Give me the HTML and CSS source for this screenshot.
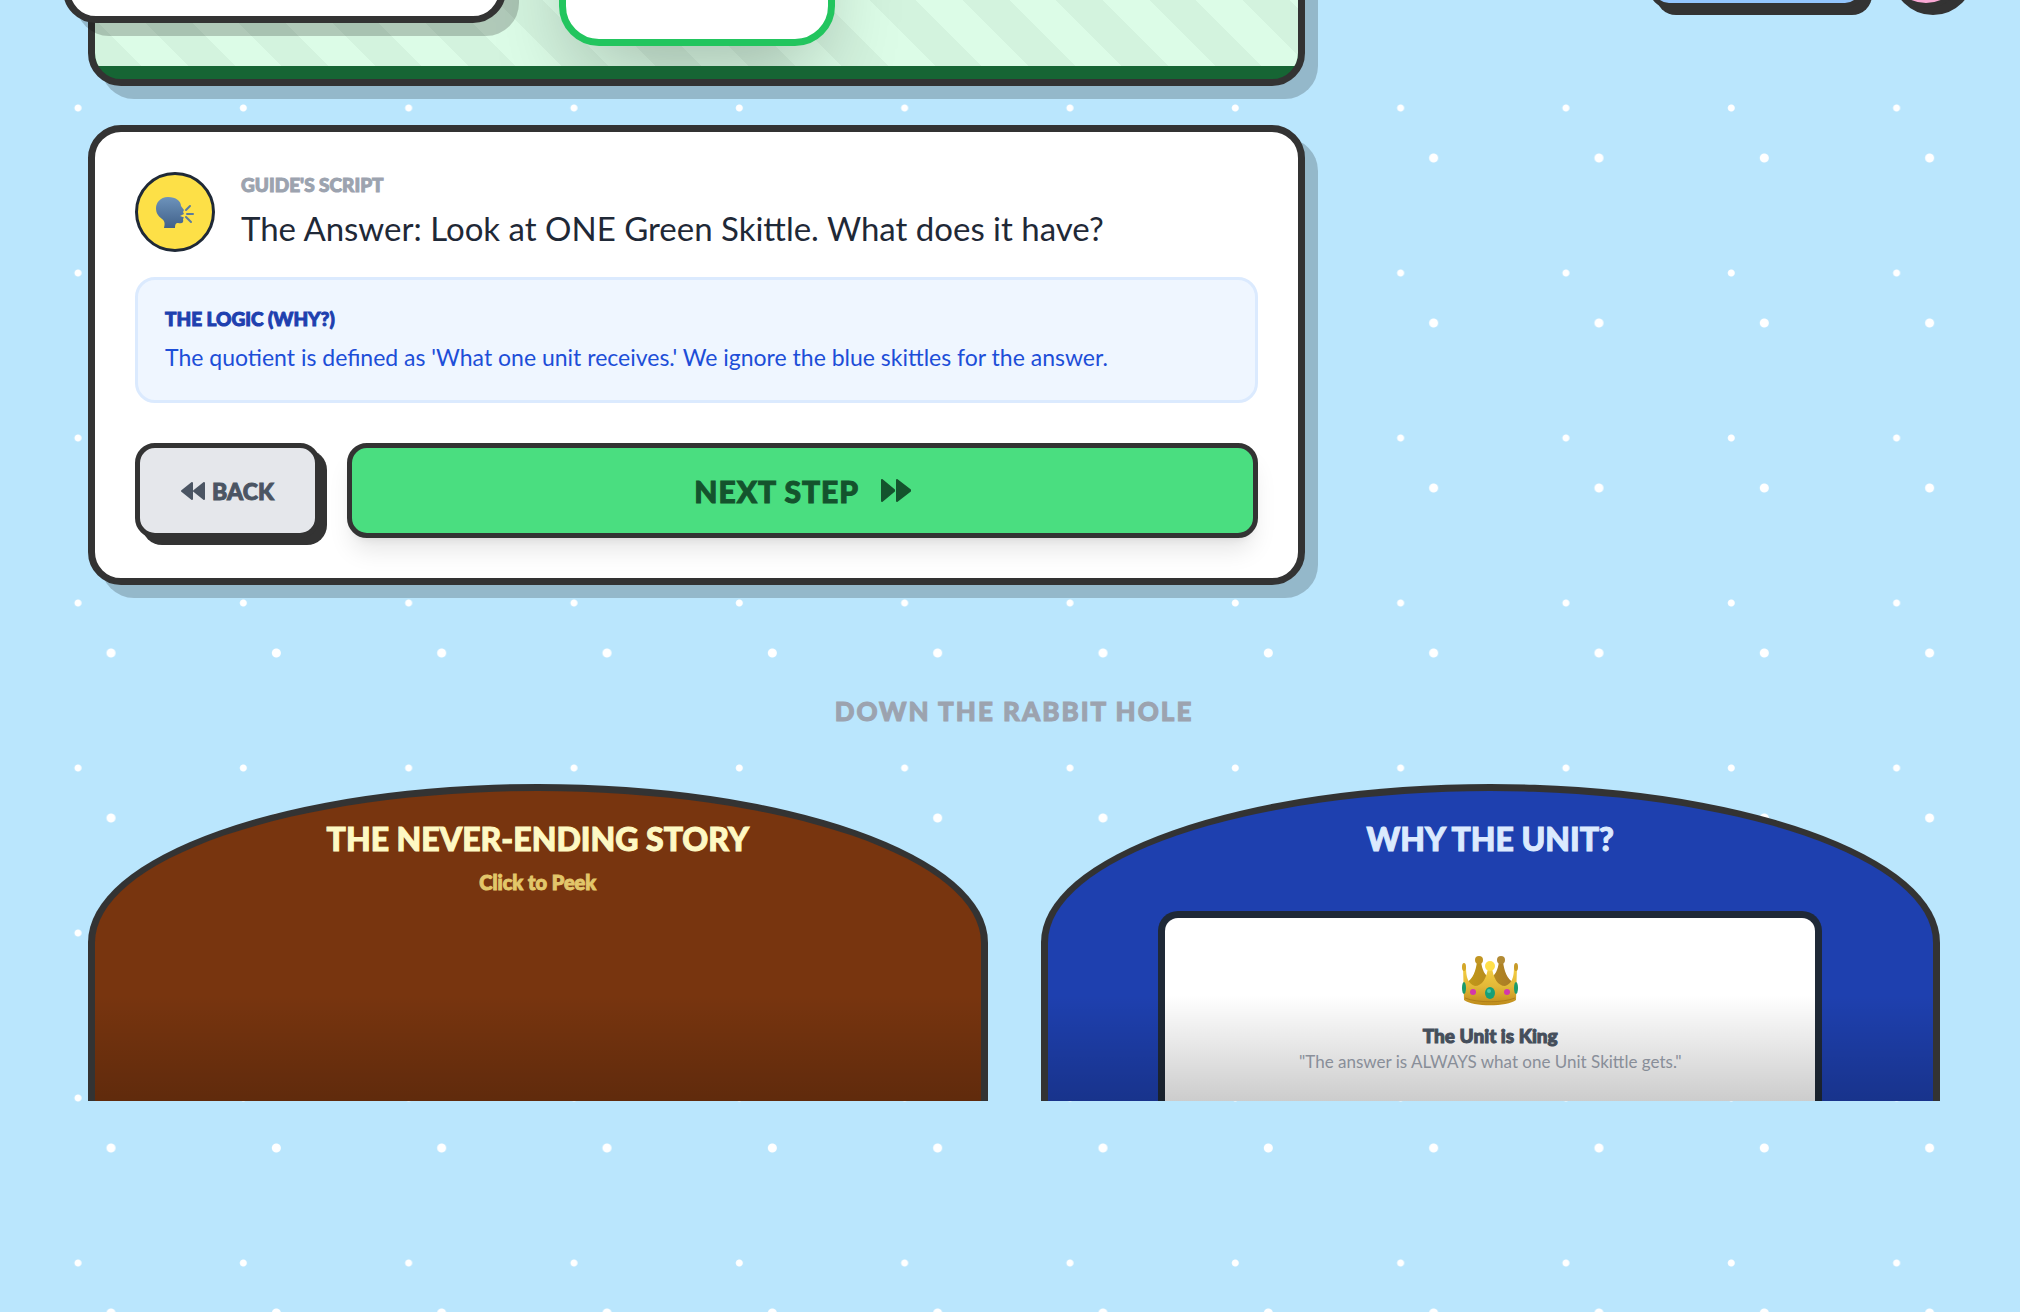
FILE: index.html
```html
<!DOCTYPE html>
<html lang="en">
<head>
<meta charset="utf-8">
<meta name="viewport" content="width=device-width, initial-scale=1">
<title>Down the Rabbit Hole</title>
<link rel="stylesheet" href="styles.css">
</head>
<body>
<div class="sky">
<header class="topbar">
  <div class="brand"></div>
  <div class="tools">
    <button class="tool tool-blue" type="button" aria-label="Menu"></button>
    <button class="tool tool-pink" type="button" aria-label="Sound"></button>
  </div>
</header>
<main class="page">
  <div class="columns">
    <div class="lesson">
      <section class="board">
        <div class="felt"><div class="tile"></div></div>
      </section>
      <section class="panel script">
        <div class="guide">
          <div class="avatar">
            <svg viewBox="0 0 40 36" width="40" height="36" aria-hidden="true">
              <defs><linearGradient id="head" x1="0" y1="0" x2="0" y2="1"><stop offset="0" stop-color="#6d93bb"/><stop offset="1" stop-color="#41618a"/></linearGradient></defs>
              <path fill="url(#head)" d="M13 3C5 3 1 9 1 14c0 5 2 8 6 11 3 2 3 5 2 9h11c0-4 1-5 3-5 4 1 6 0 5-4 1-1 1-2 0-2l-3-1 4-2-1-2 1-2-3-4C26 7 21 3 13 3z"/>
              <path fill="none" stroke="#5c7d9c" stroke-width="2" stroke-linecap="round" d="M31 16l4-4M32 20h6M31 23l5 5"/>
            </svg>
          </div>
          <div>
            <h2 class="eyebrow">GUIDE'S SCRIPT</h2>
            <p class="line">The Answer: Look at ONE Green Skittle. What does it have?</p>
          </div>
        </div>
        <div class="logic">
          <h3 class="logic-title">THE LOGIC (WHY?)</h3>
          <p class="logic-text">The quotient is defined as 'What one unit receives.' We ignore the blue skittles for the answer.</p>
        </div>
        <div class="actions">
          <button class="btn back" type="button">
            <svg viewBox="0 0 24 18" width="24" height="18" aria-hidden="true"><path fill="currentColor" stroke="currentColor" stroke-width="2" stroke-linejoin="round" d="M11 1v16L1 9zM23 1v16L13 9z"/></svg>
            BACK
          </button>
          <button class="btn next" type="button">
            NEXT STEP
            <svg viewBox="0 0 30 23" width="30" height="23" aria-hidden="true"><path fill="currentColor" stroke="currentColor" stroke-width="2" stroke-linejoin="round" d="M1 1v21l12-10v-1zM16 1v21l13-10v-1z"/></svg>
          </button>
        </div>
      </section>
    </div>
  </div>
  <h2 class="rabbit">DOWN THE RABBIT HOLE</h2>
  <div class="doors">
    <section class="door door-brown">
      <h3 class="door-title">THE NEVER-ENDING STORY</h3>
      <p class="door-hint">Click to Peek</p>
    </section>
    <section class="door door-blue">
      <h3 class="door-title">WHY THE UNIT?</h3>
      <div class="reveal">
        <svg class="crown" viewBox="0 0 58 50" width="58" height="50" aria-hidden="true">
          <defs>
            <linearGradient id="gold" x1="0" y1="0" x2="0" y2="1"><stop offset="0" stop-color="#f5cf42"/><stop offset=".5" stop-color="#e3b838"/><stop offset="1" stop-color="#c18d1a"/></linearGradient>
            <linearGradient id="inner" x1="0" y1="0" x2="1" y2="0"><stop offset="0" stop-color="#c39a17"/><stop offset="1" stop-color="#a87a28"/></linearGradient>
          </defs>
          <path fill="url(#inner)" d="M5 27c7-4 10-12 11-22h4c1 9 4 15 9 17 5-2 8-8 9-17h4c1 10 4 18 11 22l-8 7H13z"/>
          <circle cx="18" cy="4" r="4" fill="#c19522"/><circle cx="40" cy="4" r="4" fill="#b28a33"/>
          <path fill="url(#gold)" d="M2 11h3c0 10 2 17 9 19 7 0 12-8 13-19h4c1 11 6 19 13 19 7-2 9-9 9-19h3l-1 33c-9 7-43 7-52 0z"/>
          <path fill="none" stroke="#b28018" d="M4 42c12 5 38 5 50 0"/>
          <ellipse cx="3" cy="11" rx="2" ry="4" fill="#d4a728"/><ellipse cx="55" cy="11" rx="2" ry="4" fill="#c89b28"/>
          <circle cx="29" cy="10" r="5" fill="#ffe04a"/>
          <ellipse cx="3" cy="32" rx="2" ry="6" fill="#1c9a6a"/><ellipse cx="55" cy="32" rx="2" ry="6" fill="#1c9a6a"/>
          <ellipse cx="29" cy="37" rx="5" ry="6" fill="#16a077"/><ellipse cx="28" cy="35" rx="2" ry="2" fill="#4cc7a4"/>
          <circle cx="12" cy="36" r="3" fill="#d437ac"/><circle cx="46" cy="36" r="3" fill="#d437ac"/>
        </svg>
        <h4 class="reveal-title">The Unit is King</h4>
        <p class="reveal-text">"The answer is ALWAYS what one Unit Skittle gets."</p>
      </div>
    </section>
  </div>
</main>
</div>
</body>
</html>
```
FILE: styles.css
```css
* { box-sizing: border-box; margin: 0; }

body {
  font-family: Lato, "Open Sans", sans-serif;
  color: #1f2937;
  background: #bae6fd;
}

.sky {
  position: relative;
  min-height: 100vh;
  overflow: hidden;
  padding: 0 18px;
  background-image:
    radial-gradient(circle at 60px 108px, #fff 3px, transparent 4px),
    radial-gradient(circle at 93px 158px, #fff 4px, transparent 5px);
  background-size: 165px 165px;
  background-origin: content-box;
  background-repeat: round repeat;
}

h2, h3, h4, .btn, .door-hint {
  font-weight: 900;
  -webkit-text-stroke: 1px currentColor;
}
button { font: inherit; color: inherit; cursor: pointer; }

.topbar {
  position: absolute;
  z-index: 2;
  top: -89px;
  left: 63px;
  right: 53px;
  display: flex;
  align-items: center;
  justify-content: space-between;
}
.brand {
  width: 443px;
  height: 112px;
  border: 7px solid #333;
  border-radius: 33px;
  background: #fff;
  box-shadow: 13px 13px 0 rgba(0, 0, 0, .2);
}
.tools { display: flex; gap: 20px; }
.tool {
  height: 82px;
  border: 5px solid #333;
  box-shadow: 7px 7px 0 #333;
}
.tool-blue { width: 216px; border-radius: 20px; background: #93c5fd; }
.tool-pink { width: 82px; border-radius: 50%; background: #f9a8d4; }

.page { padding: 0 62px 0 70px; }
.columns { display: grid; grid-template-columns: 2fr 1fr; gap: 26px; }
.lesson { display: grid; gap: 39px; }

.board {
  height: 300px;
  margin-top: -214px;
  overflow: hidden;
  border: 7px solid #333;
  border-radius: 33px;
  box-shadow: 13px 13px 0 rgba(0, 0, 0, .2);
  background: #166534;
  display: flex;
  padding-bottom: 13px;
}
.felt {
  flex: 1;
  overflow: hidden;
  display: flex;
  justify-content: center;
  padding-bottom: 20px;
  background: repeating-linear-gradient(45deg, #d3f3de 0 33px, #dcfce7 33px 66px);
}
.tile {
  width: 276px;
  border: 7px solid #22c55e;
  border-radius: 40px;
  background: #fff;
  box-shadow: 0 41px 83px -20px rgba(0, 0, 0, .25);
}

.panel {
  padding: 40px;
  border: 7px solid #333;
  border-radius: 33px;
  background: #fff;
  box-shadow: 13px 13px 0 rgba(0, 0, 0, .2);
}
.guide { display: flex; gap: 26px; }
.avatar {
  flex: none;
  width: 80px;
  height: 80px;
  display: grid;
  place-items: center;
  border: 3px solid #1f2937;
  border-radius: 50%;
  background: #fde047;
}
.eyebrow { font-size: 19px; line-height: 25px; color: #9ca3af; }
.line { margin-top: 9px; font-size: 33px; line-height: 44px; }

.logic {
  margin-top: 25px;
  padding: 25px 27px 19px;
  border: 3px solid #dbeafe;
  border-radius: 20px;
  background: #eff6ff;
}
.logic-title { font-size: 19px; line-height: 28px; color: #1e40af; }
.logic-text { font-size: 23px; line-height: 48px; color: #1d4ed8; }

.actions { display: flex; gap: 27px; margin-top: 40px; }
.btn {
  height: 95px;
  display: flex;
  align-items: center;
  justify-content: center;
  border: 5px solid #333;
  border-radius: 20px;
}
.back {
  width: 185px;
  gap: 7px;
  background: #e5e7eb;
  box-shadow: 7px 7px 0 #333;
  color: #4b5563;
  font-size: 23px;
}
.next {
  flex: 1;
  gap: 22px;
  background: #4ade80;
  box-shadow: 0 17px 25px -5px rgba(0, 0, 0, .1), 0 7px 10px -7px rgba(0, 0, 0, .1);
  color: #14532d;
  font-size: 30px;
  letter-spacing: 1px;
}

.rabbit {
  margin-top: 106px;
  text-align: center;
  font-size: 26px;
  line-height: 40px;
  letter-spacing: 2px;
  color: #9ca3af;
}

.doors { display: grid; grid-template-columns: 1fr 1fr; gap: 53px; margin-top: 53px; }
.door {
  position: relative;
  height: 317px;
  overflow: hidden;
  display: flex;
  flex-direction: column;
  align-items: center;
  padding-top: 28px;
  border: 7px solid #333;
  border-bottom: 0;
  border-radius: 50% 50% 0 0;
}
.door::after {
  content: "";
  position: absolute;
  inset: auto 0 0;
  height: 106px;
  background: linear-gradient(to top, rgba(0, 0, 0, .2), transparent);
}
.door-brown { background: #78350f; color: #fef9c3; }
.door-blue { background: #1e40af; color: #dbeafe; }
.door-title { font-size: 32px; line-height: 40px; }
.door-hint { margin-top: 10px; font-size: 20px; line-height: 26px; color: #e2c66a; }
.reveal {
  width: 75%;
  height: 190px;
  margin-top: auto;
  padding-top: 38px;
  border: 7px solid #1f2937;
  border-bottom: 0;
  border-radius: 20px 20px 0 0;
  background: #fff;
  text-align: center;
}
.crown { display: block; margin: 0 auto; }
.reveal-title { margin-top: 17px; font-size: 19px; line-height: 26px; color: #4b5563; }
.reveal-text { font-size: 17px; line-height: 26px; color: #9ca3af; }
```
